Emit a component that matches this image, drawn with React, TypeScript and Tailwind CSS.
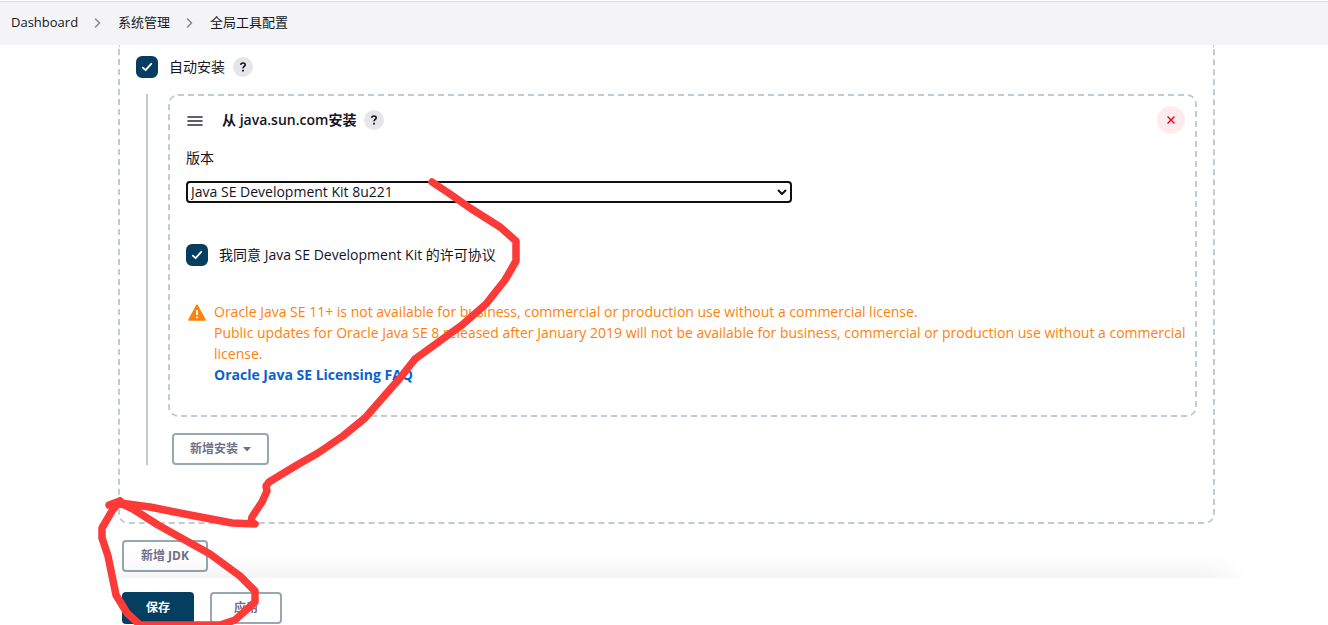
import { useState } from 'react'
import type { ReactNode } from 'react'

function Chevron() {
  return (
    <svg width="8" height="12" viewBox="0 0 8 12" fill="none" aria-hidden="true">
      <path d="M1.5 2L5.5 6L1.5 10" stroke="#85858f" strokeWidth="1.5" strokeLinecap="round" strokeLinejoin="round" />
    </svg>
  )
}

function HelpButton() {
  return (
    <button type="button" aria-label="Help" className="flex size-5 items-center justify-center rounded-full bg-[#e6e6e8]">
      <svg width="8" height="10" viewBox="0 0 8 10" fill="none">
        <path d="M1.7 2.9C1.8 1.6 2.7 1 3.9 1C5.2 1 6.2 1.8 6.2 2.9C6.2 4.4 4 4.4 4 6.3" stroke="#14141f" strokeWidth="1.6" />
        <path d="M3.1 7.7H4.9V9.4H3.1Z" fill="#14141f" />
      </svg>
    </button>
  )
}

function Checkbox({ id, children }: { id: string; children: ReactNode }) {
  return (
    <div className="flex h-[22px] items-center">
      <span className="grid size-[22px]">
        <input
          id={id}
          type="checkbox"
          defaultChecked
          className="peer col-start-1 row-start-1 size-[22px] appearance-none rounded-md border-2 border-[#063e61] checked:bg-[#063e61]"
        />
        <svg
          viewBox="0 0 22 22"
          fill="none"
          className="pointer-events-none invisible col-start-1 row-start-1 peer-checked:visible"
        >
          <path d="M6.8 11.6L9.6 14.2L15.2 7.8" stroke="#fff" strokeWidth="1.8" strokeLinecap="round" strokeLinejoin="round" />
        </svg>
      </span>
      <label htmlFor={id} className="pl-[11px]">
        {children}
      </label>
    </div>
  )
}

const outlineButton =
  'flex h-8 items-center justify-center rounded border-2 border-[#98a6b0] text-xs font-bold text-[#716f87]'

export default function App() {
  const [version, setVersion] = useState('8u221')

  return (
    <div className="relative min-h-screen overflow-hidden bg-white font-['Open_Sans','Noto_Sans_CJK_SC',sans-serif] text-sm text-[#14141f]">
      <nav className="border-t border-white">
        <ol className="flex h-11 items-center gap-4 border-t border-[#d9dcdf] bg-[#f4f4f7] px-[11px] pb-0.5 text-[13px]">
          <li><a href="#dashboard">Dashboard</a></li>
          <li><Chevron /></li>
          <li><a href="#manage">系统管理</a></li>
          <li><Chevron /></li>
          <li><a href="#tools">全局工具配置</a></li>
        </ol>
      </nav>

      <main className="pl-[118px] pr-[113px]">
        {/* JDK entry */}
        <section className="rounded-b-[10px] border-2 border-t-0 border-dashed border-[#c1cbd0] px-4 pt-[11px] pb-[57px]">
          <div className="flex items-center gap-2">
            <Checkbox id="auto-install">自动安装</Checkbox>
            <HelpButton />
          </div>

          <div className="mt-4 ml-[10px] border-l-2 border-[#c1cbd0] pl-5">
            <div className="rounded-[10px] border-2 border-dashed border-[#c1cbd0] px-4 pt-[10px] pb-[30px]">
              <div className="-mr-1.5 flex h-7 items-center">
                <svg width="18" height="14" viewBox="0 0 18 14" fill="none" aria-hidden="true">
                  <path d="M2 4H16M2 8H16M2 12H16" stroke="#2b2b3a" strokeWidth="1.6" strokeLinecap="round" />
                </svg>
                <h2 className="mr-2 ml-[18px] font-semibold">从 java.sun.com安装</h2>
                <HelpButton />
                <button
                  type="button"
                  aria-label="Delete"
                  className="ml-auto flex size-7 items-center justify-center rounded-full bg-[#fdebed]"
                >
                  <svg width="8" height="8" viewBox="0 0 8 8">
                    <path d="M0.5 0.5L7.5 7.5M7.5 0.5L0.5 7.5" stroke="#e6001f" strokeWidth="1.4" />
                  </svg>
                </button>
              </div>

              <label htmlFor="version" className="mt-[14px] block leading-5">版本</label>
              <div className="mt-[13px] grid w-[61%] items-center">
                <select
                  id="version"
                  value={version}
                  onChange={(e) => setVersion(e.target.value)}
                  className="col-start-1 row-start-1 h-[22px] appearance-none rounded border-2 border-[#101010] bg-white pl-[3px] leading-4"
                >
                  <option value="8u221">Java SE Development Kit 8u221</option>
                </select>
                <svg
                  width="10"
                  height="6"
                  viewBox="0 0 10 6"
                  fill="none"
                  className="pointer-events-none col-start-1 row-start-1 mr-[5px] justify-self-end"
                >
                  <path d="M1 1L5 5L9 1" stroke="#101010" strokeWidth="2" />
                </svg>
              </div>

              <div className="mt-[41px]">
                <Checkbox id="license">我同意 Java SE Development Kit 的许可协议</Checkbox>
              </div>

              <div className="mt-[35px] -mr-2 flex gap-2 pl-0.5 leading-[21px] text-[#fe820a]">
                <svg width="18" height="17" viewBox="0 0 18 17" className="mt-[3px] shrink-0" aria-hidden="true">
                  <path d="M9 1.2L17 16H1Z" fill="#fe820a" stroke="#fe820a" strokeWidth="1.6" strokeLinejoin="round" />
                  <path d="M9 6V11" stroke="#fff" strokeWidth="1.9" />
                  <path d="M9 12.4V14.3" stroke="#fff" strokeWidth="1.9" />
                </svg>
                <div>
                  <p>Oracle Java SE 11+ is not available for business, commercial or production use without a commercial license.</p>
                  <p>
                    Public updates for Oracle Java SE 8 released after January 2019 will not be available for business,
                    commercial or production use without a commercial license.
                  </p>
                  <a href="#faq" className="block font-bold text-[#0b62cc]">Oracle Java SE Licensing FAQ</a>
                </div>
              </div>
            </div>

            <button type="button" className={`${outlineButton} mt-4 ml-1 gap-[5px] px-4`}>
              新增安装
              <svg width="8" height="5" viewBox="0 0 8 5" aria-hidden="true">
                <path d="M0 0H8L4 4.5Z" fill="#716f87" />
              </svg>
            </button>
          </div>
        </section>

        <button type="button" className={`${outlineButton} mt-4 ml-1 px-[17px]`}>新增 JDK</button>

        {/* Bottom bar */}
        <div className="relative mt-1.5 ml-1 flex gap-4 bg-white pt-[14px]">
          <div className="pointer-events-none absolute -inset-x-10 -top-7 h-7 overflow-hidden px-7 pt-7">
            <div className="h-16 shadow-[0_0_30px_rgba(0,0,0,0.1)]" />
          </div>
          <button type="submit" className="h-8 w-18 rounded bg-[#063e61] text-xs font-bold text-white">保存</button>
          <button type="button" className={`${outlineButton} w-18`}>应用</button>
        </div>
      </main>

      {/* Freehand marks */}
      <svg
        width="1328"
        height="625"
        viewBox="0 0 1328 625"
        fill="none"
        stroke="#fc3a38"
        strokeWidth="7.5"
        strokeLinecap="round"
        strokeLinejoin="round"
        className="pointer-events-none absolute top-0 left-0"
        aria-hidden="true"
      >
        <path d="M432 182L450 194L470 208L500 227L516 241V261L505 280L486 304L462 325L415 359L400 378L365 418L343 436L318 453L297 465L269 482L266 486L267 491L262 502L252 517L251 522L255 524L232 523L190 515L150 507L120 503L109 505L120 501" />
        <path d="M120 501L112 511L102 528V538L108 556L116 595L127 613L140 625H220L235 620L255 602V591L240 576L210 554L158 525L133 509L120 503" />
      </svg>
    </div>
  )
}
